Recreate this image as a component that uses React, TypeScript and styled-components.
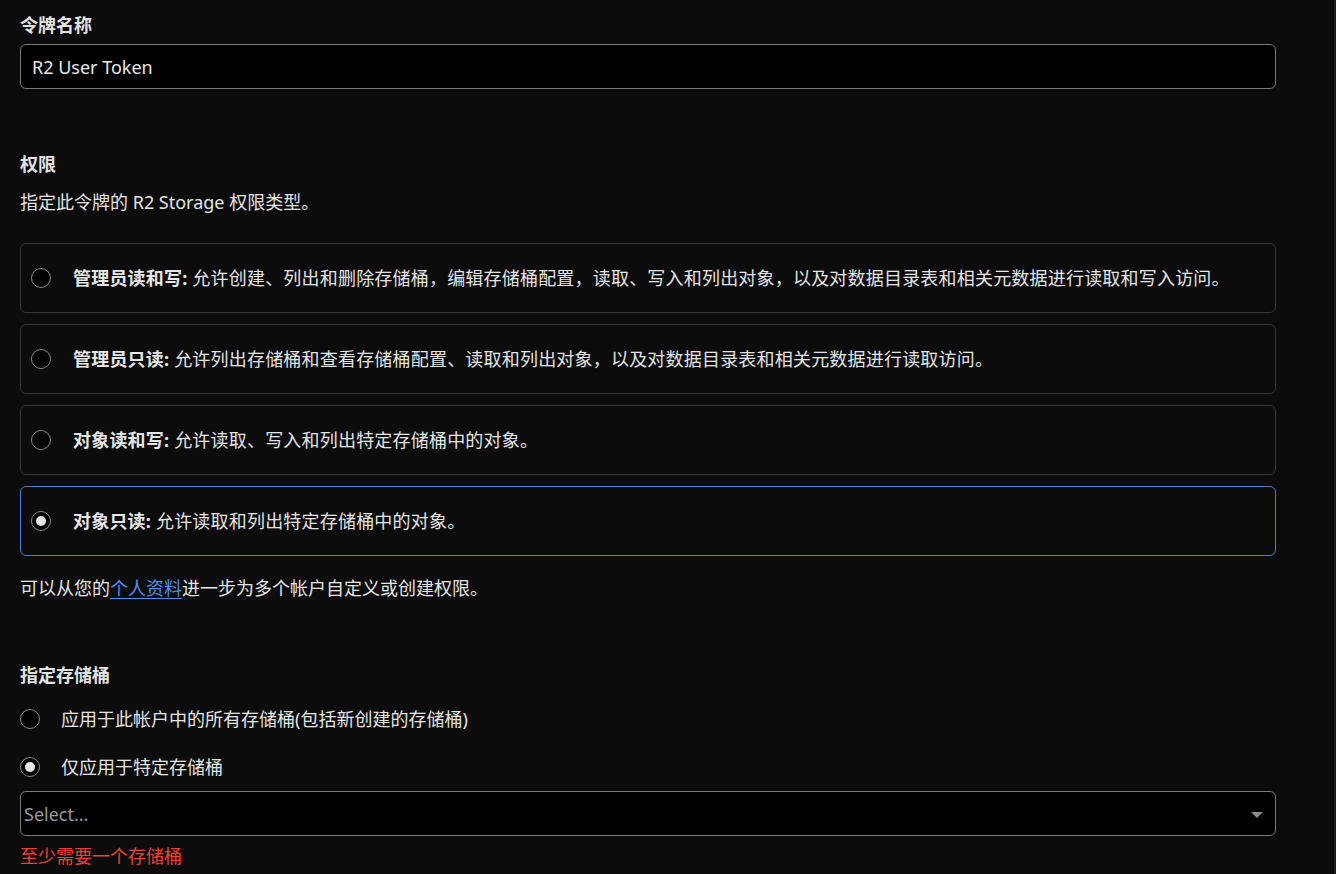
import React, { useState } from 'react';
import styled, { createGlobalStyle } from 'styled-components';

const GlobalStyle = createGlobalStyle`
  html, body {
    margin: 0;
    padding: 0;
    background: #0c0c0c;
  }
  body {
    font-family: 'Noto Sans', 'Noto Sans CJK SC', sans-serif;
    color: #e4e4e4;
    font-size: 18px;
  }
`;

const Page = styled.div`
  min-height: 100vh;
  box-sizing: border-box;
  padding: 13px 20px 0;
  border-right: 2px solid #1c1c1c;
`;

const Form = styled.div`
  width: 1256px;
  display: flex;
  flex-direction: column;
`;

const Label = styled.div<{ $top?: number }>`
  font-weight: 700;
  line-height: 24px;
  margin-top: ${p => p.$top ?? 0}px;
  color: #e2e2e2;
`;

const TextInput = styled.input`
  margin-top: 7px;
  height: 45px;
  box-sizing: border-box;
  background: #000;
  border: 1px solid #7a7a7a;
  border-radius: 6px;
  color: #e8e8e8;
  font-family: inherit;
  font-size: 18px;
  padding: 0 11px;
  outline: none;
`;

const Description = styled.div`
  margin-top: 14px;
  line-height: 24px;
`;

const Cards = styled.div`
  margin-top: 29px;
  display: flex;
  flex-direction: column;
  gap: 11px;
`;

const Card = styled.label<{ $selected: boolean }>`
  height: 70px;
  box-sizing: border-box;
  border: 1px solid ${p => (p.$selected ? '#4a7ed2' : '#363636')};
  border-radius: 6px;
  display: flex;
  align-items: center;
  padding: 0 0 0 10px;
  cursor: pointer;
`;

const RadioDot = styled.span<{ $checked: boolean }>`
  flex: none;
  width: 20px;
  height: 20px;
  box-sizing: border-box;
  border-radius: 50%;
  border: 1px solid #8a8a8a;
  background: #000;
  display: flex;
  align-items: center;
  justify-content: center;

  &::after {
    content: '';
    display: ${p => (p.$checked ? 'block' : 'none')};
    width: 10px;
    height: 10px;
    border-radius: 50%;
    background: #e6e6e6;
  }
`;

const CardText = styled.span`
  margin-left: 22px;
  line-height: 24px;
  letter-spacing: 0.2px;

  b {
    font-weight: 700;
    color: #e6e6e6;
  }
`;

const Note = styled.div`
  margin-top: 20px;
  line-height: 24px;

  a {
    color: #4d8fe8;
    text-decoration: underline;
    text-underline-offset: 3px;
  }
`;

const Option = styled.label<{ $top: number }>`
  display: flex;
  align-items: center;
  line-height: 24px;
  margin-top: ${p => p.$top}px;
  cursor: pointer;
`;

const OptionText = styled.span`
  margin-left: 21px;
`;

const SelectBox = styled.div`
  margin-top: 12px;
  height: 45px;
  box-sizing: border-box;
  background: #000;
  border: 1px solid #7a7a7a;
  border-radius: 6px;
  display: flex;
  align-items: center;
  justify-content: space-between;
  padding: 0 12px 0 3px;
  color: #9a9a9a;
`;

const Caret = styled.span`
  width: 0;
  height: 0;
  border-left: 6px solid transparent;
  border-right: 6px solid transparent;
  border-top: 6px solid #8c8c8c;
  margin-top: 3px;
`;

const ErrorText = styled.div`
  margin-top: 8px;
  line-height: 24px;
  color: #ea4335;
`;

const permissions = [
  {
    title: '管理员读和写:',
    text: '允许创建、列出和删除存储桶，编辑存储桶配置，读取、写入和列出对象，以及对数据目录表和相关元数据进行读取和写入访问。',
  },
  {
    title: '管理员只读:',
    text: '允许列出存储桶和查看存储桶配置、读取和列出对象，以及对数据目录表和相关元数据进行读取访问。',
  },
  { title: '对象读和写:', text: '允许读取、写入和列出特定存储桶中的对象。' },
  { title: '对象只读:', text: '允许读取和列出特定存储桶中的对象。' },
];

const App: React.FC = () => {
  const [perm, setPerm] = useState(3);
  const [scope, setScope] = useState(1);

  return (
    <Page>
      <GlobalStyle />
      <Form>
        <Label>令牌名称</Label>
        <TextInput defaultValue='R2 User Token' />

        <Label $top={63}>权限</Label>
        <Description>指定此令牌的 R2 Storage 权限类型。</Description>

        <Cards>
          {permissions.map((p, i) => (
            <Card key={p.title} $selected={perm === i} onClick={() => setPerm(i)}>
              <RadioDot $checked={perm === i} />
              <CardText>
                <b>{p.title}</b> {p.text}
              </CardText>
            </Card>
          ))}
        </Cards>

        <Note>
          可以从您的<a href='#'>个人资料</a>进一步为多个帐户自定义或创建权限。
        </Note>

        <Label $top={63}>指定存储桶</Label>
        <Option $top={20} onClick={() => setScope(0)}>
          <RadioDot $checked={scope === 0} />
          <OptionText>应用于此帐户中的所有存储桶(包括新创建的存储桶)</OptionText>
        </Option>
        <Option $top={24} onClick={() => setScope(1)}>
          <RadioDot $checked={scope === 1} />
          <OptionText>仅应用于特定存储桶</OptionText>
        </Option>

        <SelectBox>
          <span>Select...</span>
          <Caret />
        </SelectBox>
        <ErrorText>至少需要一个存储桶</ErrorText>
      </Form>
    </Page>
  );
};

export default App;
